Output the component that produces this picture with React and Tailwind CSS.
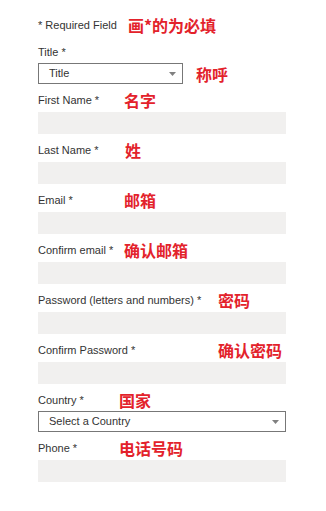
const cjk = { fontFamily: '"Noto Sans CJK SC", "Liberation Sans", sans-serif' };

function Note({ children, className = '' }) {
  return (
    <span
      className={`text-[16px] leading-4 font-bold text-[#e3222b] whitespace-nowrap ${className}`}
      style={cjk}
    >
      {children}
    </span>
  );
}

function Label({ text, note, labelW }) {
  return (
    <div className="flex h-4 items-center">
      <span className={`text-[11px] text-[#333] whitespace-nowrap ${labelW}`}>{text}</span>
      {note && <Note>{note}</Note>}
    </div>
  );
}

function Input() {
  return <div className="mt-1 h-[22px] w-[248px] bg-[#f1f0ef]" />;
}

function Arrow() {
  return (
    <svg width="7" height="4" viewBox="0 0 7 4" className="shrink-0">
      <path d="M0 0h7L3.5 4z" fill="#808080" />
    </svg>
  );
}

const fields = [
  { text: 'First Name *', note: '名字', w: 'w-[86px]' },
  { text: 'Last Name *', note: '姓', w: 'w-[87px]' },
  { text: 'Email *', note: '邮箱', w: 'w-[86px]' },
  { text: 'Confirm email *', note: '确认邮箱', w: 'w-[86px]' },
  { text: 'Password (letters and numbers) *', note: '密码', w: 'w-[180px]' },
  { text: 'Confirm Password *', note: '确认密码', w: 'w-[180px]' },
];

export default function App() {
  return (
    <div
      className="min-h-screen bg-white pl-[38px] pt-[17px]"
      style={{ fontFamily: '"Liberation Sans", Arial, sans-serif' }}
    >
      <Label text="* Required Field" note="画*的为必填" labelW="w-[90px]" />

      <div className="mt-[11px]">
        <Label text="Title *" labelW="" />
        <div className="mt-[3px] flex items-center">
          <div className="flex h-[21px] w-[145px] items-center justify-between border border-[#777] pl-[10px] pr-[6px]">
            <span className="text-[11px] text-[#333]">Title</span>
            <Arrow />
          </div>
          <Note className="ml-[13px]">称呼</Note>
        </div>
      </div>

      {fields.map((f) => (
        <div key={f.text} className="mt-2">
          <Label text={f.text} note={f.note} labelW={f.w} />
          <Input />
        </div>
      ))}

      <div className="mt-2">
        <Label text="Country *" note="国家" labelW="w-[81px]" />
        <div className="mt-[3px] flex h-[21px] w-[248px] items-center justify-between border border-[#777] pl-[10px] pr-[6px]">
          <span className="text-[11px] text-[#333]">Select a Country</span>
          <Arrow />
        </div>
      </div>

      <div className="mt-2">
        <Label text="Phone *" note="电话号码" labelW="w-[81px]" />
        <Input />
      </div>
    </div>
  );
}
